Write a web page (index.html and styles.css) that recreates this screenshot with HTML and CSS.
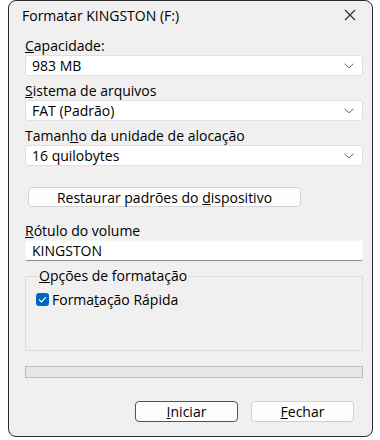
FILE: index.html
```html
<!DOCTYPE html>
<html lang="pt-BR">
<head>
    <meta charset="UTF-8">
    <meta name="viewport" content="width=device-width, initial-scale=1.0">
    <title>Formatar KINGSTON (F:)</title>
    <link rel="stylesheet" href="styles.css">
</head>
<body>
    <div class="window">
        <div class="titlebar">
            <span class="title">Formatar KINGSTON (F:)</span>
            <span class="close">
                <svg width="12" height="12" viewBox="0 0 12 12"><path d="M1 1L11 11M11 1L1 11" stroke="#2b2b2b" stroke-width="1.1" fill="none"/></svg>
            </span>
        </div>
        <div class="content">
            <div class="field">
                <label><u>C</u>apacidade:</label>
                <div class="select">
                    <span>983 MB</span>
                    <svg class="chevron" width="10" height="6" viewBox="0 0 10 6"><path d="M0.5 0.8L5 4.8L9.5 0.8" stroke="#6b6b6b" stroke-width="1" fill="none"/></svg>
                </div>
            </div>
            <div class="field">
                <label><u>S</u>istema de arquivos</label>
                <div class="select">
                    <span>FAT (Padrão)</span>
                    <svg class="chevron" width="10" height="6" viewBox="0 0 10 6"><path d="M0.5 0.8L5 4.8L9.5 0.8" stroke="#6b6b6b" stroke-width="1" fill="none"/></svg>
                </div>
            </div>
            <div class="field">
                <label>Taman<u>h</u>o da unidade de alocação</label>
                <div class="select">
                    <span>16 quilobytes</span>
                    <svg class="chevron" width="10" height="6" viewBox="0 0 10 6"><path d="M0.5 0.8L5 4.8L9.5 0.8" stroke="#6b6b6b" stroke-width="1" fill="none"/></svg>
                </div>
            </div>

            <button class="restore-button">Restaurar padrões do <u>d</u>ispositivo</button>

            <div class="field volume">
                <label><u>R</u>ótulo do volume</label>
                <div class="textbox">KINGSTON</div>
            </div>

            <fieldset class="options">
                <legend><u>O</u>pções de formatação</legend>
                <div class="check-row">
                    <span class="checkbox">
                        <svg width="9" height="7" viewBox="0 0 9 7"><path d="M1 3.6L3.4 5.8L8 1.2" stroke="#fff" stroke-width="1.2" fill="none"/></svg>
                    </span>
                    <span>Forma<u>t</u>ação Rápida</span>
                </div>
            </fieldset>

            <div class="progress"></div>

            <div class="actions">
                <button class="btn primary"><u>I</u>niciar</button>
                <button class="btn"><u>F</u>echar</button>
            </div>
        </div>
    </div>
</body>
</html>
```

FILE: styles.css
```css
body {
    margin: 0;
    background-color: #fff;
    font-family: "Open Sans", "Noto Sans", sans-serif;
    font-size: 14px;
    color: #000;
}
.window {
    margin-left: 8px;
    width: 365px;
    height: 437px;
    background-color: #f0f0f0;
    border: 1px solid #2a2a2a;
    border-radius: 8px;
    box-sizing: border-box;
}
.titlebar {
    display: flex;
    justify-content: space-between;
    align-items: center;
    height: 28px;
    padding: 0 16px 0 13px;
}
.title {
    font-size: 14px;
}
.close {
    display: flex;
}
.content {
    padding: 8px 9px 0 16px;
}
.field label {
    display: block;
    height: 18px;
    line-height: 18px;
}
.field {
    margin-bottom: 6px;
}
.select,
.textbox {
    display: flex;
    justify-content: space-between;
    align-items: center;
    height: 21px;
    padding: 0 8px 0 6px;
    background-color: #fff;
    border: 1px solid #e0e0e0;
    border-radius: 3px;
    box-sizing: border-box;
}
.textbox {
    border-color: #f6f6f6;
    border-bottom-color: #8a8a8a;
    border-radius: 2px;
}
.chevron {
    display: block;
}
.restore-button {
    display: block;
    margin: 21px 0 15px 3px;
    width: 273px;
    height: 20px;
    padding: 0;
    font-family: inherit;
    font-size: 14px;
    color: #000;
    background-color: #fdfdfd;
    border: 1px solid #d2d2d2;
    border-radius: 4px;
}
.volume {
    margin-bottom: 7px;
}
.options {
    margin: 0;
    height: 83px;
    padding: 6px 10px 0 10px;
    border: 1px solid #dcdcdc;
    border-radius: 0;
    box-sizing: border-box;
}
.options legend {
    padding: 0 2px;
    margin-left: 1px;
    line-height: 16px;
}
.check-row {
    display: flex;
    align-items: center;
    gap: 3px;
}
.checkbox {
    display: flex;
    justify-content: center;
    align-items: center;
    width: 13px;
    height: 13px;
    background-color: #0067c0;
    border-radius: 3px;
}
.progress {
    margin-top: 15px;
    height: 12px;
    background-color: #e6e6e6;
    border: 1px solid #bcbcbc;
    box-sizing: border-box;
}
.actions {
    display: flex;
    justify-content: flex-end;
    gap: 13px;
    margin-top: 23px;
    padding-right: 9px;
}
.btn {
    width: 103px;
    height: 21px;
    padding: 0;
    font-family: inherit;
    font-size: 14px;
    color: #000;
    background-color: #fdfdfd;
    border: 1px solid #d0d0d0;
    border-radius: 4px;
}
.btn.primary {
    border-color: #0067c0;
}
```
